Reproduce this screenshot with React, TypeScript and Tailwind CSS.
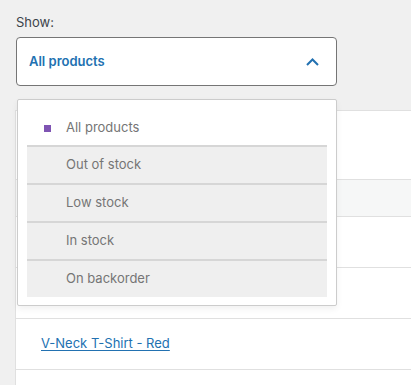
import { useState } from "react";

const options = ["All products", "Out of stock", "Low stock", "In stock", "On backorder"];

export default function App() {
  const [selected] = useState("All products");

  return (
    <div className="relative h-[385px] w-[411px] overflow-hidden bg-[#f0f0f0] font-['Inter',sans-serif] text-[13px]">
      <div className="pl-4 pt-[14px]">
        <label className="block leading-4 text-[#3c434a]">Show:</label>
        <button
          type="button"
          className="mt-[7px] flex h-[49px] w-[321px] items-center justify-between rounded-[4px] border border-[#757575] bg-white pl-[12px] pr-[17px] text-left font-semibold text-[#2271b1]"
        >
          <span>{selected}</span>
          <svg width="13" height="8" viewBox="0 0 13 8" fill="none" className="mt-[1px]">
            <path d="M1 7l5.5-5.5 5.5 5.5" stroke="#2271b1" strokeWidth="2" />
          </svg>
        </button>
      </div>

      {/* table behind the dropdown */}
      <div className="ml-[15px] mt-[24px] border-l border-t border-[#e0e0e0] bg-white">
        <div className="h-[69px] border-b border-[#e0e0e0]" />
        <div className="h-[37px] border-b border-[#e0e0e0] bg-[#f6f7f7]" />
        <div className="h-[51px] border-b border-[#e0e0e0]" />
        <div className="h-[51px] border-b border-[#e0e0e0]" />
        <div className="flex h-[51px] items-center border-b border-[#e0e0e0] pl-[25px]">
          <a href="#" className="text-[#2271b1] underline underline-offset-2">
            V-Neck T-Shirt - Red
          </a>
        </div>
        <div className="h-[51px]" />
      </div>

      {/* dropdown menu */}
      <div className="absolute left-[17px] top-[99px] w-[320px] rounded-[2px] border border-[#cccccc] bg-white px-[9px] pb-[8px] pt-[7px] shadow-[0_3px_6px_rgba(0,0,0,0.06)]">
        {options.map((opt, i) =>
          i === 0 ? (
            <div key={opt} className="flex h-[38px] items-center pl-[17px] pt-[4px] text-[#757575]">
              <span className="mr-[15px] h-[7px] w-[7px] bg-[#7f54b3]" />
              {opt}
            </div>
          ) : (
            <div
              key={opt}
              className="flex h-[38px] items-center border-t-2 border-[#d6d6d6] bg-[#efefef] pl-[39px] text-[#757575]"
            >
              {opt}
            </div>
          )
        )}
      </div>
    </div>
  );
}
